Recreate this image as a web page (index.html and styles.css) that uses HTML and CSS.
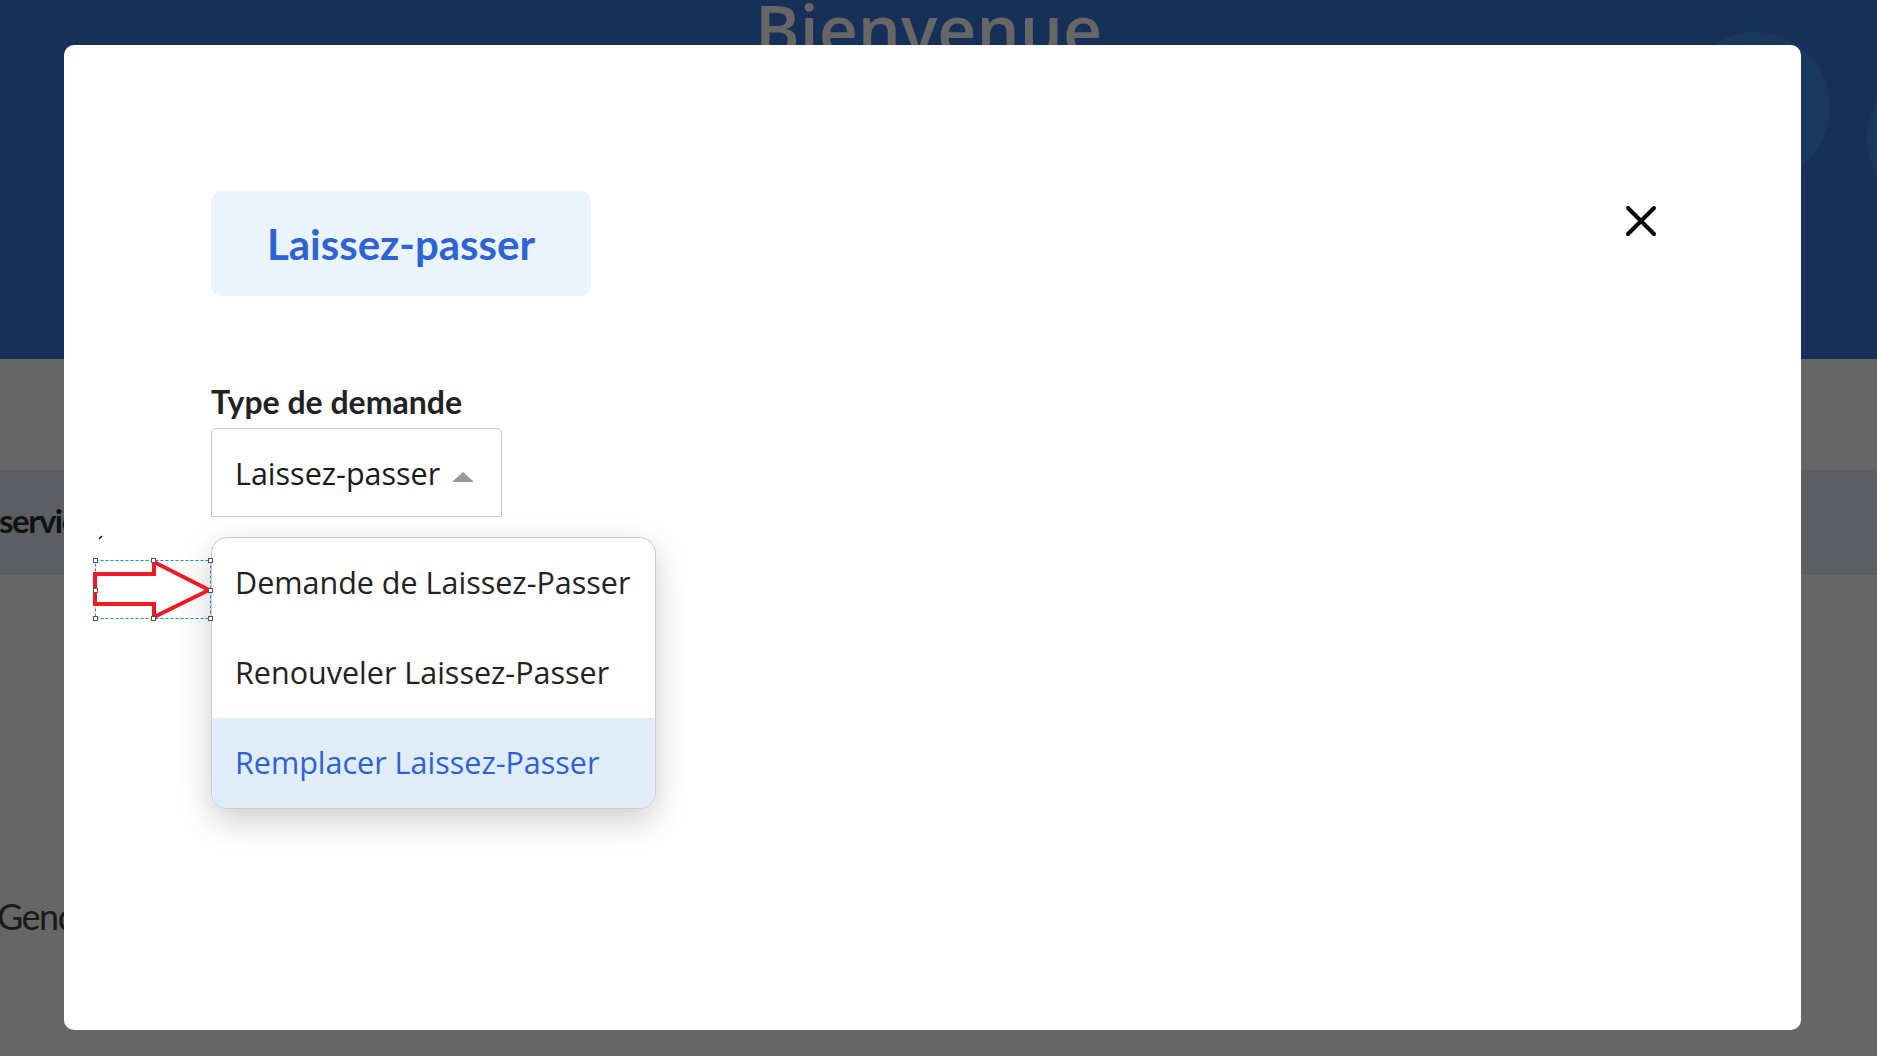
FILE: index.html
```html
<!DOCTYPE html>
<html lang="fr">
<head>
<meta charset="utf-8">
<title>Laissez-passer</title>
<link rel="stylesheet" href="styles.css">
</head>
<body>
  <div class="page">
    <header class="hero">
      <span class="circle circle-a"></span>
      <span class="circle circle-b"></span>
      <h1 class="hero-title">Bienvenue</h1>
    </header>
    <section class="content">
      <div class="band"><span class="band-text">services</span></div>
      <div class="field-bg">Gendarmerie</div>
    </section>
  </div>

  <div class="modal">
    <div class="modal-head">
      <div class="tab">Laissez-passer</div>
      <button class="close" aria-label="Fermer">
        <svg width="32" height="32" viewBox="0 0 32 32"><path d="M3 3 L29 29 M29 3 L3 29" stroke="#000" stroke-width="4" stroke-linecap="round" fill="none"/></svg>
      </button>
    </div>

    <div class="field">
      <div class="label">Type de demande</div>
      <div class="select-wrap">
        <div class="select">
          <span class="select-value">Laissez-passer</span>
          <span class="caret"></span>
        </div>
        <ul class="menu">
          <li class="menu-item">Demande de Laissez-Passer</li>
          <li class="menu-item">Renouveler Laissez-Passer</li>
          <li class="menu-item active">Remplacer Laissez-Passer</li>
        </ul>
      </div>
    </div>

    <svg class="annot" width="130" height="92" viewBox="88 533 130 92">
      <path d="M99 539 L102 536" stroke="#000" stroke-width="1.2"/>
      <rect x="95.5" y="560.5" width="115" height="58" fill="none" stroke="#1e88e5" stroke-width="1" stroke-dasharray="3 2"/>
      <polygon points="95,574 154,574 154,562 209,590 154,617 154,604 95,604" fill="#fff" stroke="#ed1c24" stroke-width="4" stroke-linejoin="miter"/>
      <g fill="#fff" stroke="#555" stroke-width="1">
        <rect x="93.5" y="558.5" width="4" height="4"/>
        <rect x="151.5" y="558.5" width="4" height="4"/>
        <rect x="208.5" y="558.5" width="4" height="4"/>
        <rect x="93.5" y="588.5" width="4" height="4"/>
        <rect x="208.5" y="588.5" width="4" height="4"/>
        <rect x="93.5" y="616.5" width="4" height="4"/>
        <rect x="151.5" y="616.5" width="4" height="4"/>
        <rect x="208.5" y="616.5" width="4" height="4"/>
      </g>
    </svg>
  </div>
</body>
</html>
```
FILE: styles.css
```css
html, body {
  margin: 0;
  padding: 0;
}
body {
  width: 1877px;
  height: 1056px;
  overflow: hidden;
  background: #666666;
  font-family: "Open Sans", "Noto Sans", sans-serif;
}

.page {
  width: 1877px;
  height: 1056px;
  overflow: hidden;
}

.hero {
  position: relative;
  height: 359px;
  background: #17305a;
  overflow: hidden;
  text-align: center;
  padding-right: 20px;
  box-sizing: border-box;
}
.circle {
  position: absolute;
  border-radius: 50%;
  background: #1a3760;
}
.circle-a {
  left: 1680px;
  top: 32px;
  width: 150px;
  height: 150px;
}
.circle-b {
  left: 1867px;
  top: 62px;
  width: 150px;
  height: 150px;
}
.hero-title {
  position: relative;
  margin: -6px 0 0 0;
  font-family: "Open Sans", sans-serif;
  font-weight: 600;
  font-size: 68px;
  line-height: 70px;
  color: #666666;
}

.content {
  background: #666666;
  height: 697px;
  padding-top: 111px;
  box-sizing: border-box;
}
.band {
  height: 105px;
  background: #5b5f64;
  display: flex;
  align-items: center;
  padding-bottom: 6px;
  box-sizing: border-box;
}
.band-text {
  margin-left: -1px;
  font-family: "Lato", sans-serif;
  font-size: 33px;
  font-weight: 700;
  letter-spacing: -1.5px;
  color: #121212;
}
.field-bg {
  margin-top: 316px;
  margin-left: -3px;
  font-family: "Lato", sans-serif;
  font-size: 36px;
  line-height: 50px;
  letter-spacing: -1.5px;
  color: #1a1a1a;
}

.modal {
  position: fixed;
  left: 64px;
  top: 45px;
  width: 1737px;
  height: 985px;
  box-sizing: border-box;
  padding: 146px 144px 0 147px;
  background: #ffffff;
  border-radius: 10px;
}
.modal-head {
  display: flex;
  justify-content: space-between;
  align-items: flex-start;
}
.tab {
  width: 380px;
  height: 105px;
  display: flex;
  align-items: center;
  justify-content: center;
  background: #ebf3fc;
  border-radius: 10px;
  font-family: "Lato", sans-serif;
  font-size: 42px;
  font-weight: 700;
  color: #2f63d5;
}
.close {
  margin-top: 14px;
  width: 32px;
  height: 32px;
  padding: 0;
  border: 0;
  background: none;
  display: block;
}
.close svg {
  display: block;
}

.field {
  margin-top: 87px;
}
.label {
  font-family: "Lato", sans-serif;
  font-size: 32px;
  line-height: 38px;
  font-weight: 700;
  color: #222222;
}
.select-wrap {
  position: relative;
  margin-top: 7px;
  width: 291px;
}
.select {
  height: 89px;
  box-sizing: border-box;
  border: 1.5px solid #c8c8c8;
  border-radius: 5px 5px 0 0;
  display: flex;
  align-items: center;
  padding-left: 23px;
  gap: 12px;
}
.select-value {
  font-size: 30.5px;
  line-height: 40px;
  color: #1a1a1a;
}
.caret {
  width: 0;
  height: 0;
  border-left: 11px solid transparent;
  border-right: 11px solid transparent;
  border-bottom: 10px solid #9a9a9a;
  margin-top: 8px;
}
.menu {
  position: absolute;
  left: 0;
  top: 109px;
  width: 445px;
  height: 272px;
  box-sizing: border-box;
  margin: 0;
  padding: 0;
  list-style: none;
  background: #ffffff;
  border: 1.5px solid #cccccc;
  border-radius: 16px;
  overflow: hidden;
  box-shadow: 0 12px 34px rgba(0, 0, 0, 0.2);
  display: flex;
  flex-direction: column;
}
.menu-item {
  flex: 1;
  display: flex;
  align-items: center;
  padding-left: 23px;
  padding-bottom: 2px;
  font-size: 30.5px;
  line-height: 40px;
  color: #222222;
}
.menu-item.active {
  background: #e0ecf8;
  color: #2d62d4;
}

.annot {
  position: absolute;
  left: 24px;
  top: 488px;
}
```
